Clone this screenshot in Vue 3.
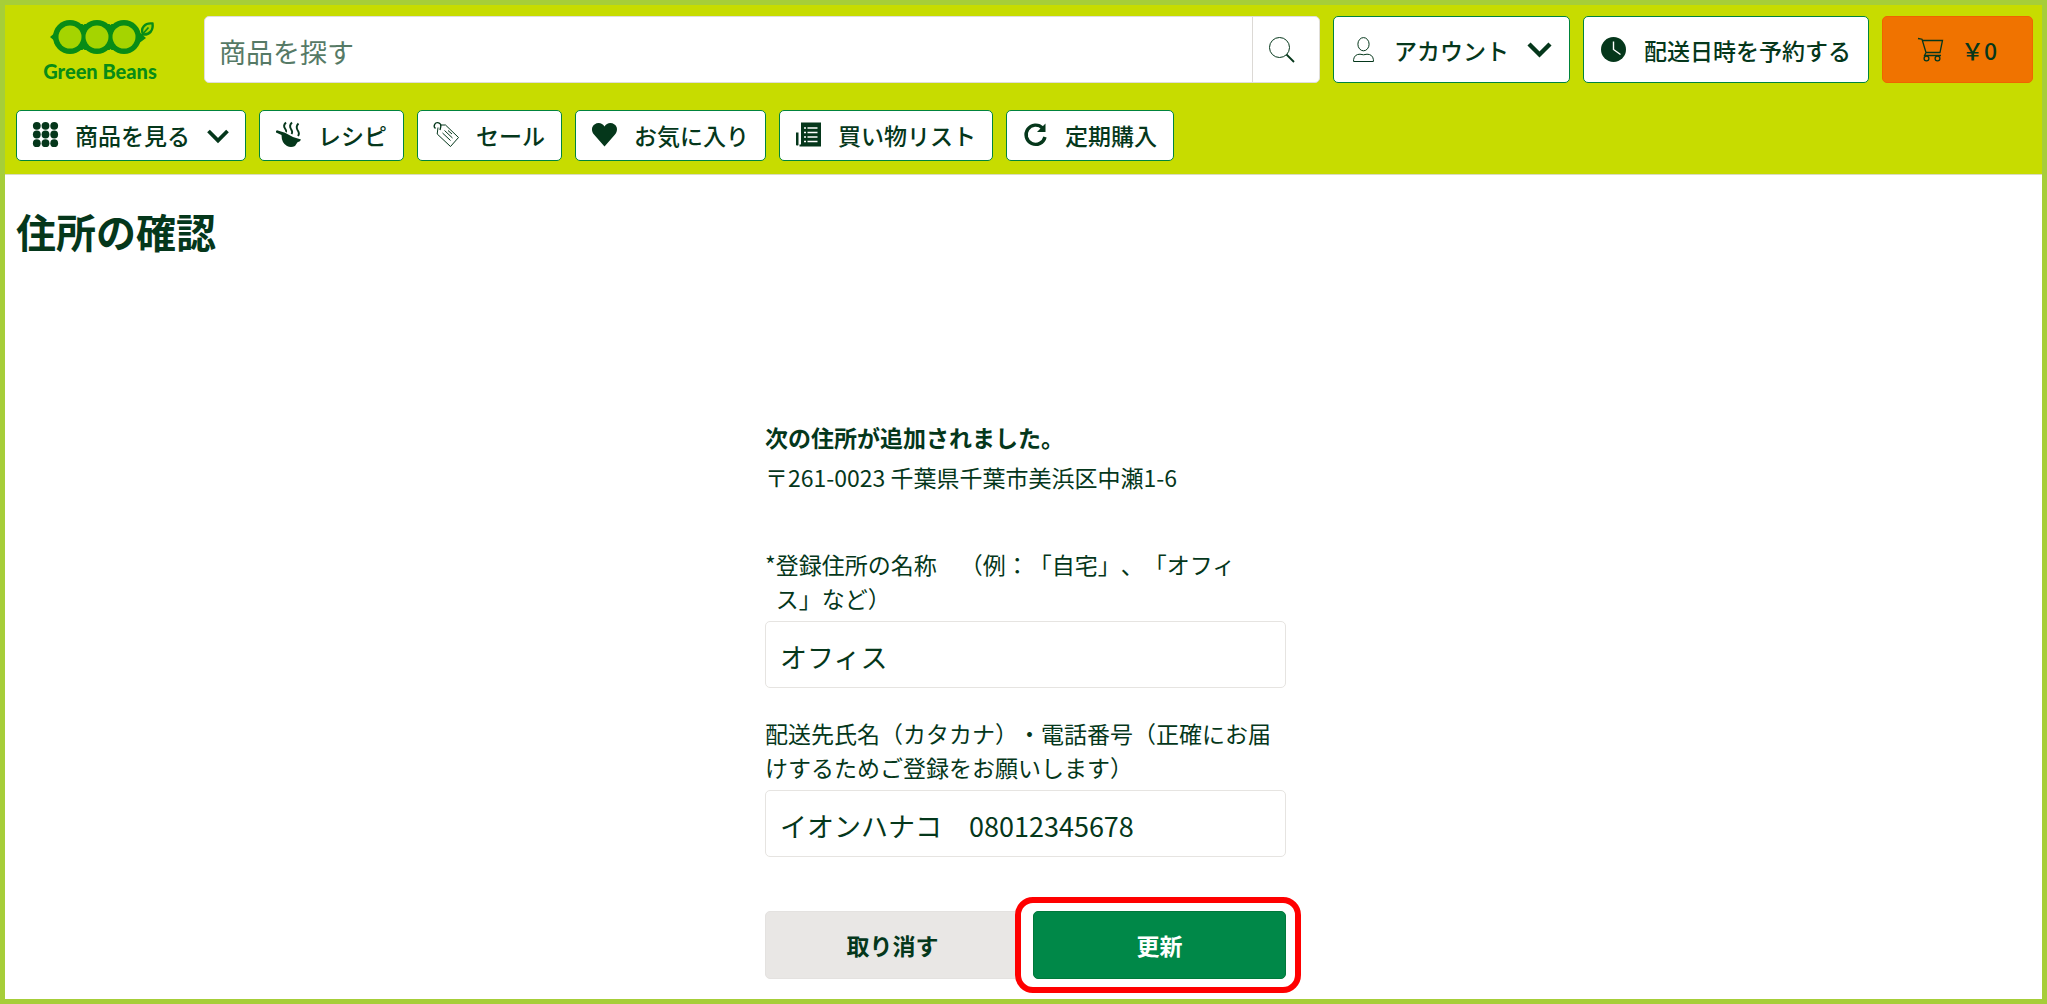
<template>
  <div class="page">
    <header class="header">
      <div class="top-row">
        <a href="#" class="logo">
          <svg class="logo-mark" viewBox="-4 0 110 36" aria-hidden="true">
            <path d="M1 18 L8 12 L8 24 Z M89 12 L97 19 L89 25 Z" fill="#088c16" />
            <circle v-for="x in [21, 48, 75]" :key="x" :cx="x" cy="18" r="17" fill="#088c16" />
            <path d="M30 5 H66 V31 H30 Z" fill="#088c16" />
            <path d="M28 0 H41 L34.5 6 Z M55 0 H68 L61.5 6 Z M28 36 H41 L34.5 30 Z M55 36 H68 L61.5 30 Z" fill="#c7dc00" />
            <circle v-for="x in [21, 48, 75]" :key="'b' + x" :cx="x" cy="18" r="11.5" fill="#a5d400" />
            <path d="M94 15.5 C91 9 96 3.5 103.5 4.5 C104.5 11 101 16 94 15.5 Z" fill="#a5d400" stroke="#088c16" stroke-width="2.4" />
            <path d="M91 18 L99.5 8.5" stroke="#088c16" stroke-width="1.8" />
          </svg>
          <span class="logo-text">Green Beans</span>
        </a>

        <form class="search" @submit.prevent>
          <input v-model="keyword" type="search" placeholder="商品を探す" aria-label="商品を探す" />
          <button type="submit" aria-label="検索">
            <svg class="icon thin" viewBox="0 0 25 25">
              <circle cx="10.5" cy="10.5" r="10" />
              <path d="M17.5 17.5 L25 25" stroke-width="1.8" />
            </svg>
          </button>
        </form>

        <button type="button" class="btn large">
          <svg class="icon thin" viewBox="0 0 25 25">
            <ellipse cx="12.5" cy="7.2" rx="5.6" ry="6.6" />
            <path d="M2.6 24.5 V22.5 Q3.5 17.2 9 17.2 Q12.5 18.4 16 17.2 Q21.5 17.2 22.4 22.5 V24.5 Z" />
          </svg>
          アカウント
          <svg class="icon" viewBox="0 0 25 25">
            <path d="M2 7 L12.5 17.5 L23 7" fill="none" stroke="#05371b" stroke-width="4.4" />
          </svg>
        </button>

        <button type="button" class="btn large">
          <svg class="icon" viewBox="0 0 25 25">
            <circle cx="12.5" cy="12.5" r="12.5" fill="#05371b" />
            <path d="M12.5 4.5 V12.5 L19.5 17.5" fill="none" stroke="#fff" stroke-width="1.4" />
          </svg>
          配送日時を予約する
        </button>

        <button type="button" class="btn large cart">
          <svg class="icon thin" viewBox="0 0 25 25">
            <path d="M0 1.5 L4 2.2 L8 15.5 H22 L24.5 3.5 H4.5 M8 15.5 L6.5 18.5 H23" stroke-width="1.3" />
            <circle cx="8.5" cy="21.5" r="2.4" stroke-width="1.3" />
            <circle cx="19.5" cy="21.5" r="2.4" stroke-width="1.3" />
          </svg>
          ￥0
        </button>
      </div>

      <nav class="nav-row">
        <button type="button" class="btn">
          <svg class="icon" viewBox="0 0 25 25">
            <g v-for="y in [3.8, 12.5, 21.2]" :key="y" fill="#05371b">
              <circle v-for="x in [3.8, 12.5, 21.2]" :key="x" :cx="x" :cy="y" r="3.9" />
            </g>
          </svg>
          商品を見る
          <svg class="icon small" viewBox="0 0 22 22">
            <path d="M1.5 7 L11 16.5 L20.5 7" fill="none" stroke="#05371b" stroke-width="3.8" />
          </svg>
        </button>
        <a v-for="item in navItems" :key="item.label" href="#" class="btn">
          <svg class="icon" viewBox="0 0 25 25">
            <template v-if="item.icon === 'recipe'">
              <path d="M0 9 L1 8.2 L9 10.8 Q16 15.5 25 17.5 Q24.5 19.5 21.5 20.3 L19 24 Q15 26 11 24 Q5.5 21 5.5 13 L0 10.5 Z" fill="#05371b" />
              <path d="M10 0.5 Q6.8 3.5 9 6.5 Q10.8 9 9.8 10 M16 0.5 Q12.8 3.5 15 7 Q17 10 15.5 12 M22.5 1.5 Q19.5 4.5 21.5 8 Q24 11.5 22 14" fill="none" stroke="#05371b" stroke-width="1.9" />
            </template>
            <g v-else-if="item.icon === 'sale'" fill="none" stroke="#05371b">
              <path d="M4 5.5 L3.2 12 L16.5 24.5 L24.5 15.5 L11.5 3 L7 3" />
              <path d="M1.5 6.5 A3.3 3.3 0 1 1 6.8 4.5 L6 8" stroke-width="1.3" />
              <path d="M8.5 11 L16.5 18.5 M10.5 8.5 L18.5 16 M14 8.5 L18 12" />
            </g>
            <path v-else-if="item.icon === 'heart'" d="M12.5 24.5 L2 12.5 C-1 9 -0.5 4.5 2.5 2.5 C6 0 10.5 1 12.5 4.5 C14.5 1 19 0 22.5 2.5 C25.5 4.5 26 9 23 12.5 Z" fill="#05371b" />
            <template v-else-if="item.icon === 'list'">
              <path d="M5 0.5 H25 V24.5 H3.5 V22.5 H5 Z M0 10.5 H2.5 V23 Q1.5 24 0 23 Z" fill="#05371b" />
              <path d="M8 6 H10 M11.5 6 H21.5 M8 10.5 H10 M11.5 10.5 H21.5 M8 15 H10 M11.5 15 H21.5 M8 19.5 H10 M11.5 19.5 H21.5" stroke="#fff" stroke-width="1.3" />
            </template>
            <template v-else>
              <path d="M19.5 6 A9.6 9.6 0 1 0 22 15" fill="none" stroke="#05371b" stroke-width="3.4" />
              <path d="M22.5 1.5 V10 H14 Z" fill="#05371b" />
            </template>
          </svg>
          {{ item.label }}
        </a>
      </nav>
    </header>

    <main class="content">
      <h1>住所の確認</h1>

      <form class="address-form" @submit.prevent>
        <p class="added">次の住所が追加されました。</p>
        <p class="address">〒261-0023 千葉県千葉市美浜区中瀬1-6</p>

        <div class="field">
          <label for="address-name" class="required">
            <span>*</span><span>登録住所の名称　（例：「自宅」、「オフィス」など）</span>
          </label>
          <input id="address-name" v-model="addressName" type="text" required />
        </div>

        <div class="field">
          <label for="recipient">配送先氏名（カタカナ）・電話番号（正確にお届けするためご登録をお願いします）</label>
          <input id="recipient" v-model="recipient" type="text" />
        </div>

        <div class="actions">
          <button type="button" class="cancel">取り消す</button>
          <div class="highlight">
            <button type="submit" class="update">更新</button>
          </div>
        </div>
      </form>
    </main>
  </div>
</template>

<script setup>
import { ref } from 'vue'

const keyword = ref('')
const addressName = ref('オフィス')
const recipient = ref('イオンハナコ　08012345678')

const navItems = [
  { icon: 'recipe', label: 'レシピ' },
  { icon: 'sale', label: 'セール' },
  { icon: 'heart', label: 'お気に入り' },
  { icon: 'list', label: '買い物リスト' },
  { icon: 'repeat', label: '定期購入' }
]
</script>

<style>
body {
  margin: 0;
  background: #fff;
}
</style>

<style scoped>
.page {
  box-sizing: border-box;
  min-height: 100vh;
  border: 5px solid #a6ce39;
  background: #fff;
  color: #05371b;
  font-family: "Noto Sans CJK JP", sans-serif;
  font-size: 23px;
  line-height: 34px;
  text-spacing-trim: space-all;
}

.page button,
.page input {
  box-sizing: border-box;
  font-family: inherit;
  color: inherit;
}

.header {
  padding: 11px 9px 13px 11px;
  background: #c7dc00;
  border-bottom: 1px solid #d9dcc0;
}

.top-row {
  display: flex;
  gap: 13px;
  height: 67px;
}

.logo {
  display: flex;
  flex-direction: column;
  align-items: center;
  width: 168px;
  margin-right: 7px;
  color: #088c16;
  text-decoration: none;
}

.logo-mark {
  flex-shrink: 0;
  width: 110px;
  height: 36px;
  margin-top: 3px;
}

.logo-text {
  font-family: Lato, sans-serif;
  font-size: 20px;
  font-weight: 900;
  line-height: 32px;
}

.search {
  display: flex;
  flex: 1;
  min-width: 0;
  box-sizing: border-box;
  border: 1px solid #e0ded9;
  border-radius: 5px;
  background: #fff;
  overflow: hidden;
}

.search input {
  flex: 1;
  min-width: 0;
  padding: 3px 14px 0;
  border: none;
  background: none;
  font-size: 27px;
}

.search input::placeholder {
  color: #567a66;
  opacity: 1;
}

.search button {
  display: flex;
  align-items: center;
  justify-content: center;
  width: 67px;
  padding: 0 8px 0 0;
  border: none;
  border-left: 1px solid #dcd9d5;
  background: none;
}

.btn {
  display: flex;
  flex-shrink: 0;
  align-items: center;
  gap: 17px;
  box-sizing: border-box;
  height: 51px;
  padding: 0 16px 2px;
  border: 1px solid #00843d;
  border-radius: 5px;
  background: #fff;
  color: #05371b;
  font-size: 23px;
  font-weight: 500;
  line-height: 34px;
  text-decoration: none;
  white-space: nowrap;
  cursor: pointer;
}

.btn.large {
  gap: 18px;
  height: 67px;
  padding: 0 17px;
}

.btn.cart {
  padding: 0 35px;
  border-color: #f06400;
  background: #f07300;
}

.icon {
  flex-shrink: 0;
  width: 25px;
  height: 25px;
  overflow: visible;
}

.icon.small {
  width: 22px;
  height: 22px;
}

.icon.thin {
  fill: none;
  stroke: #05371b;
}

.nav-row {
  display: flex;
  gap: 13px;
  margin-top: 27px;
}

.content {
  padding: 26px 7px 20px 11px;
}

h1 {
  margin: 0;
  font-size: 40px;
  font-weight: 700;
  line-height: 60px;
}

.address-form {
  max-width: 521px;
  margin: 159px auto 0;
}

.address-form p {
  margin: 0;
}

.address-form .added {
  font-weight: 700;
}

.address-form .address {
  margin: 6px 0 53px;
}

.field {
  margin-bottom: 28px;
}

.field label {
  display: block;
  margin-bottom: 6px;
}

.field .required {
  display: flex;
  padding-right: 28px;
}

.field input {
  display: block;
  width: 100%;
  height: 67px;
  padding: 3px 14px 0;
  border: 1px solid #e6e4e1;
  border-radius: 5px;
  background: #fff;
  font-size: 27px;
}

.actions {
  display: flex;
  gap: 13px;
  margin-top: 54px;
}

.actions button {
  width: 100%;
  height: 68px;
  padding: 0;
  border-radius: 5px;
  font-size: 23px;
  font-weight: 700;
  cursor: pointer;
}

.actions .cancel {
  flex: 1;
  border: 1px solid #e4e2e0;
  background: #e9e7e5;
}

.highlight {
  position: relative;
  flex: 1;
}

.highlight::after {
  content: "";
  position: absolute;
  inset: -14px -15px -14px -18px;
  border: 6px solid #f00;
  border-radius: 18px;
  pointer-events: none;
}

.actions .update {
  border: 1px solid #00783a;
  background: #008848;
  color: #fff;
}
</style>
